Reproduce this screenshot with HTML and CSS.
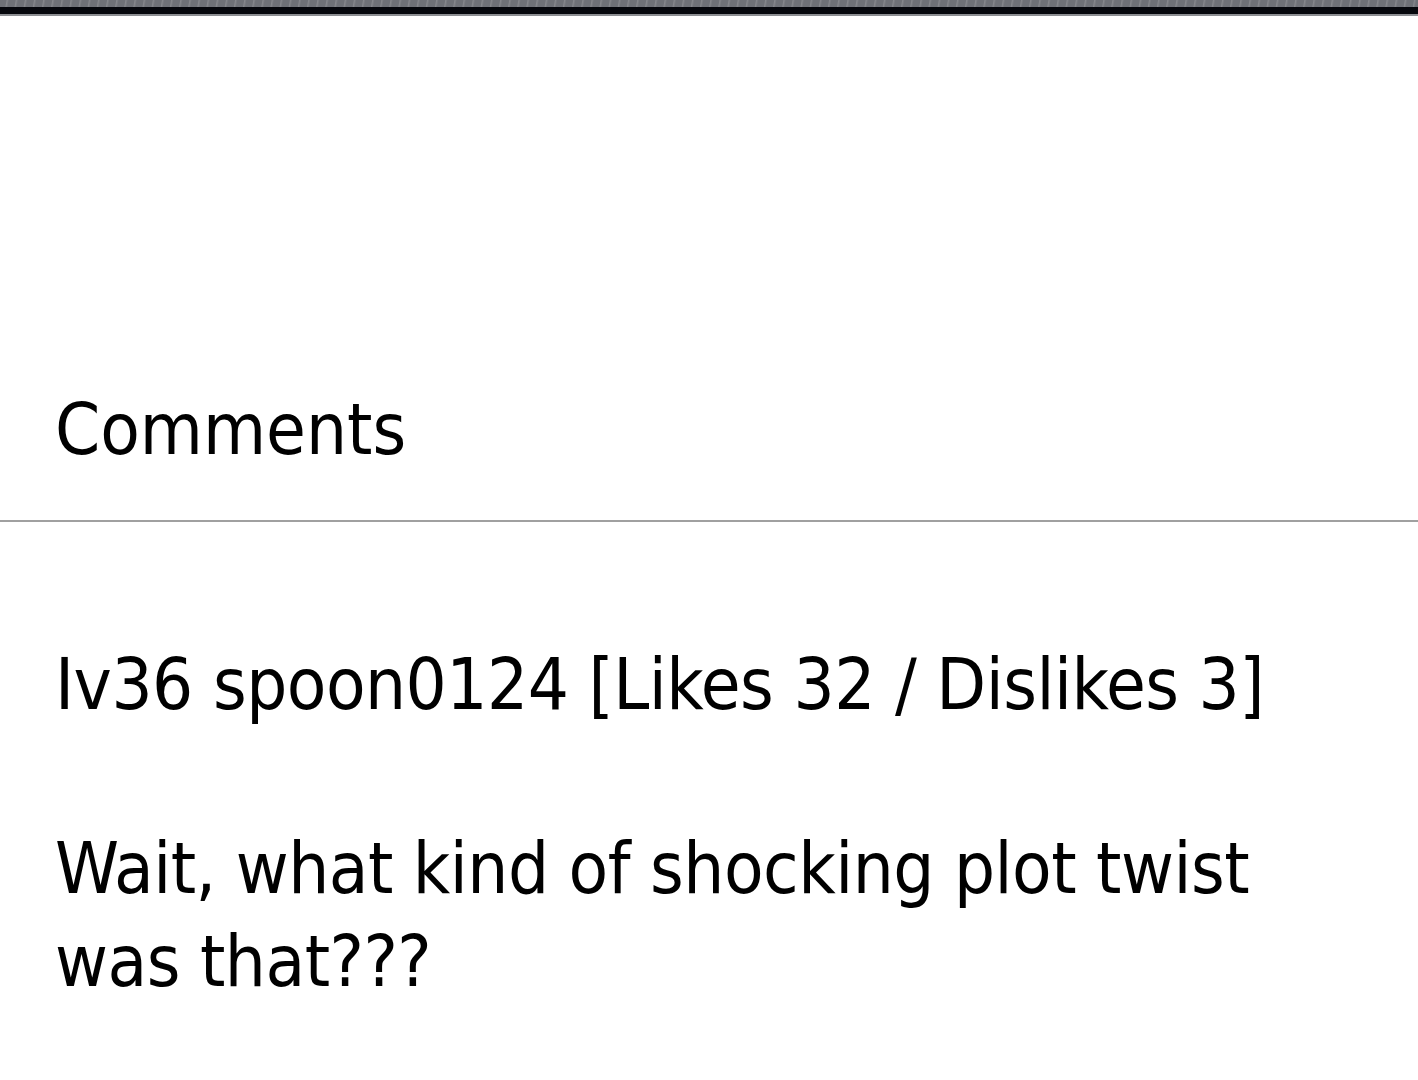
FILE: index.html
```html
<!DOCTYPE html>
<html lang="en">
<head>
    <meta charset="UTF-8">
    <meta name="viewport" content="width=device-width, initial-scale=1.0">
    <title>Comments</title>
    <link rel="stylesheet" href="styles.css">
</head>
<body>
    <div class="topbar">
        <div class="topbar-strip"></div>
        <div class="topbar-edge"></div>
    </div>
    <div class="comments">
        <h2 class="comments-title">Comments</h2>
        <div class="comment">
            <div class="comment-meta">Iv36 spoon0124 [Likes 32 / Dislikes 3]</div>
            <p class="comment-text">Wait, what kind of shocking plot twist was that???</p>
        </div>
    </div>
</body>
</html>
```

FILE: styles.css
```css
body {
    margin: 0;
    background: #ffffff;
    color: #000000;
    font-family: "DejaVu Sans Condensed", "DejaVu Sans", sans-serif;
}
.topbar {
    height: 16px;
}
.topbar-strip {
    height: 7px;
    background: repeating-linear-gradient(100deg, #6e7177 0px, #6e7177 6px, #85878c 7px, #6e7177 9px);
}
.topbar-edge {
    height: 7px;
    background: #05070c;
    border-bottom: 2px solid #8c8e92;
}
.comments {
    padding-top: 363px;
}
.comments-title {
    margin: 0;
    padding: 0 0 41px 55px;
    font-size: 72px;
    font-weight: normal;
    line-height: 100px;
    border-bottom: 2px solid #a0a0a0;
}
.comment {
    padding: 116px 100px 0 55px;
    letter-spacing: -0.5px;
}
.comment-meta {
    font-size: 72px;
    line-height: 93px;
    white-space: nowrap;
}
.comment-text {
    margin: 91px 0 0 0;
    font-size: 72px;
    line-height: 93px;
}
```
